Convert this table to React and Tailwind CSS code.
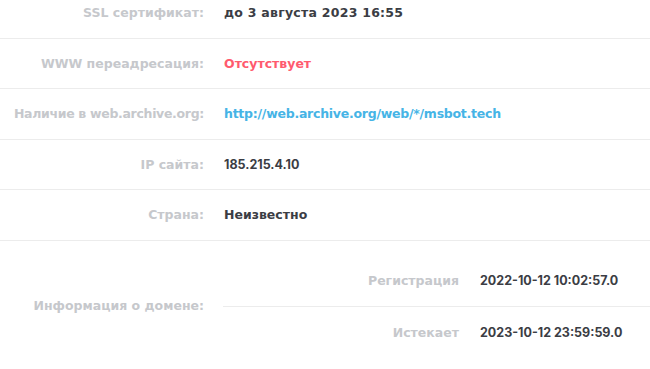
export default function App() {
  const rows = [
    { label: "SSL сертификат:", lcls: "", value: "до 3 августа 2023 16:55", cls: "text-[#3b3d44] tracking-[0.02em]" },
    { label: "WWW переадресация:", lcls: "", value: "Отсутствует", cls: "text-[#ff5a6e]" },
    { label: "Наличие в web.archive.org:", lcls: "tracking-[-0.025em]", value: "http://web.archive.org/web/*/msbot.tech", cls: "text-[#46b4e6] tracking-[-0.02em]" },
    { label: "IP сайта:", lcls: "", value: "185.215.4.10", cls: "text-[#3b3d44] font-['Inter',sans-serif]" },
    { label: "Страна:", lcls: "", value: "Неизвестно", cls: "text-[#3b3d44]" },
  ];
  return (
    <div className="w-[650px] h-[369px] overflow-hidden bg-white font-['DejaVu_Sans',sans-serif] font-bold text-[12.5px]">
      <div className="-mt-[12px]">
        {rows.map((r, i) => (
          <div key={i} className="flex items-center h-[50.5px] pt-[2px] border-b border-[#ececec]">
            <div className={"w-[204px] text-right text-[#c6c8cc] " + r.lcls}>{r.label}</div>
            <div className={"pl-[20px] " + r.cls}>{r.value}</div>
          </div>
        ))}
        <div className="flex items-center py-[15px]">
          <div className="w-[204px] text-right text-[#c6c8cc]">Информация о домене:</div>
          <div className="ml-[19px] flex-1">
            <div className="flex items-center h-[51px] pt-[2px] border-b border-[#ececec]">
              <div className="w-[236px] text-right text-[#c6c8cc]">Регистрация</div>
              <div className="pl-[21px] text-[#3b3d44] font-['Inter',sans-serif]">2022-10-12 10:02:57.0</div>
            </div>
            <div className="flex items-center h-[51px] pt-[2px]">
              <div className="w-[236px] text-right text-[#c6c8cc]">Истекает</div>
              <div className="pl-[21px] text-[#3b3d44] font-['Inter',sans-serif]">2023-10-12 23:59:59.0</div>
            </div>
          </div>
        </div>
      </div>
    </div>
  );
}
